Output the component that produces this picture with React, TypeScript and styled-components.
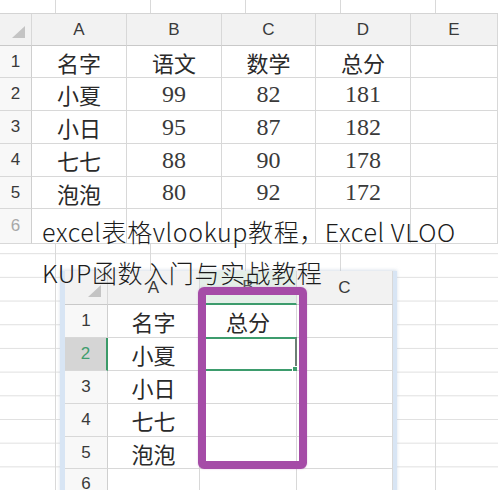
import React from "react";
import styled, { createGlobalStyle, css } from "styled-components";

const Global = createGlobalStyle`
  html, body { margin: 0; padding: 0; background: #fff; }
  body { width: 498px; height: 490px; overflow: hidden; }
`;

const Page = styled.div`
  position: relative;
  width: 498px;
  height: 490px;
  overflow: hidden;
  display: flex;
  flex-direction: column;
  background-color: #fff;
  background-image:
    linear-gradient(to right, #d9d9d9 1px, transparent 1px),
    linear-gradient(to bottom, #e0e0e0 1px, transparent 1px);
  background-size: 95px 100%, 100% 23.7px;
  background-position: 55px 0, 0 16.3px;
`;

const TopSheet = styled.div`
  margin-top: 13px;
  display: grid;
  grid-template-columns: 32px 95px 95px 94px 95px 1fr;
  grid-template-rows: 32px 32px 33px 33px 33px 32px 35px;
  background: #fff;
  border-top: 1px solid #d4d4d4;
  box-sizing: border-box;
`;

type Kind = "corner" | "col" | "row" | "data";

const Cell = styled.div<{
  $kind: Kind;
  $num?: boolean;
  $faded?: boolean;
}>`
  box-sizing: border-box;
  display: flex;
  align-items: center;
  justify-content: center;
  position: relative;
  border-right: 1px solid #d8d8d8;
  border-bottom: 1px solid #d8d8d8;
  color: #2a2a2a;
  font-family: "Noto Sans CJK SC", "Noto Sans", sans-serif;
  font-weight: 400;
  font-size: 22px;
  background: #fff;
  ${(p) =>
    p.$num &&
    css`
      font-family: "Liberation Serif", "Noto Sans CJK SC", serif;
      font-weight: 400;
      font-size: 24px;
      color: #3a3a3a;
    `}
  ${(p) =>
    (p.$kind === "col" || p.$kind === "corner") &&
    css`
      background: #f2f2f2;
      border-bottom-color: #c9c9c9;
      font-family: "Liberation Sans", "Noto Sans", sans-serif;
      font-weight: 400;
      font-size: 17px;
      color: #3a3a3a;
    `}
  ${(p) =>
    p.$kind === "row" &&
    css`
      background: #f8f8f8;
      border-right-color: #cfcfcf;
      font-family: "Liberation Sans", "Noto Sans", sans-serif;
      font-weight: 400;
      font-size: 17px;
      color: #3a3a3a;
    `}
  ${(p) =>
    p.$faded &&
    css`
      color: #a8a8a8;
    `}
`;

const Corner = styled.span`
  position: absolute;
  right: 6px;
  bottom: 7px;
  width: 13px;
  height: 12px;
  background: #c4c4c4;
  clip-path: polygon(100% 0, 100% 100%, 0 100%);
`;

const BottomWrap = styled.div`
  position: relative;
  margin: 27px 0 0 60px;
  width: 337px;
`;

const BottomSheet = styled.div`
  display: grid;
  grid-template-columns: 43px 92px 97px 96px;
  grid-template-rows: 34px 33px 33px 33px 33px 32px 30px;
  background: #fff;
  border-left: 5px solid #d8e5f4;
  border-right: 4px solid #d8e5f4;
  box-shadow: 0 -1px 3px rgba(180, 195, 215, 0.5);
`;

const RowHeadSel = styled(Cell)`
  background: #d5d5d5;
  color: #3f9d6e;
  border-right: 2px solid #3a9a68;
`;

const ColHeadSel = styled(Cell)`
  background: #e4efe8;
  color: #555;
  border-bottom: 2px solid #3d9c6d;
`;

const SelCell = styled(Cell)`
  border-top: 2px solid #3d9c6d;
  border-bottom: 2px solid #3d9c6d;
  border-right: 2px solid #6b7f74;
  margin-top: -1px;
`;

const FillHandle = styled.span`
  position: absolute;
  right: -4px;
  bottom: -4px;
  width: 5px;
  height: 5px;
  background: #3d9c6d;
  border: 1px solid #fff;
`;

const PurpleBox = styled.div`
  position: absolute;
  left: 138px;
  top: 16px;
  width: 109px;
  height: 182px;
  box-sizing: border-box;
  border: 8px solid #a54ca7;
  border-radius: 6px;
  box-shadow: 0 0 2px rgba(165, 76, 167, 0.35);
  pointer-events: none;
`;

const Title = styled.h1`
  position: absolute;
  left: 42px;
  top: 211px;
  width: 422px;
  margin: 0;
  font-family: "Noto Sans CJK SC", "Noto Sans", sans-serif;
  font-weight: 300;
  font-size: 25px;
  line-height: 41px;
  letter-spacing: 0.6px;
  color: #1c1c1c;
  word-break: break-all;
`;

const topCols = ["A", "B", "C", "D", "E"];
const topRows: string[][] = [
  ["名字", "语文", "数学", "总分", ""],
  ["小夏", "99", "82", "181", ""],
  ["小日", "95", "87", "182", ""],
  ["七七", "88", "90", "178", ""],
  ["泡泡", "80", "92", "172", ""],
  ["", "", "", "", ""],
];

const names = ["名字", "小夏", "小日", "七七", "泡泡", ""];

const isNum = (s: string) => /^\d+$/.test(s);

export default function App() {
  return (
    <Page>
      <Global />
      <TopSheet>
        <Cell $kind="corner">
          <Corner />
        </Cell>
        {topCols.map((c) => (
          <Cell key={c} $kind="col">
            {c}
          </Cell>
        ))}
        {topRows.map((row, i) => (
          <React.Fragment key={i}>
            <Cell $kind="row" $faded={i === 5}>
              {i + 1}
            </Cell>
            {row.map((v, j) => (
              <Cell key={j} $kind="data" $num={isNum(v)}>
                {v}
              </Cell>
            ))}
          </React.Fragment>
        ))}
      </TopSheet>

      <BottomWrap>
        <BottomSheet>
          <Cell $kind="corner">
            <Corner />
          </Cell>
          <Cell $kind="col">A</Cell>
          <ColHeadSel $kind="col">B</ColHeadSel>
          <Cell $kind="col">C</Cell>
          {names.map((n, i) => (
            <React.Fragment key={i}>
              {i === 1 ? (
                <RowHeadSel $kind="row">{i + 1}</RowHeadSel>
              ) : (
                <Cell $kind="row">{i + 1}</Cell>
              )}
              <Cell $kind="data">{n}</Cell>
              {i === 1 ? (
                <SelCell $kind="data">
                  <FillHandle />
                </SelCell>
              ) : (
                <Cell $kind="data">{i === 0 ? "总分" : ""}</Cell>
              )}
              <Cell $kind="data" />
            </React.Fragment>
          ))}
        </BottomSheet>
        <PurpleBox />
      </BottomWrap>

      <Title>excel表格vlookup教程，Excel VLOOKUP函数入门与实战教程</Title>
    </Page>
  );
}
